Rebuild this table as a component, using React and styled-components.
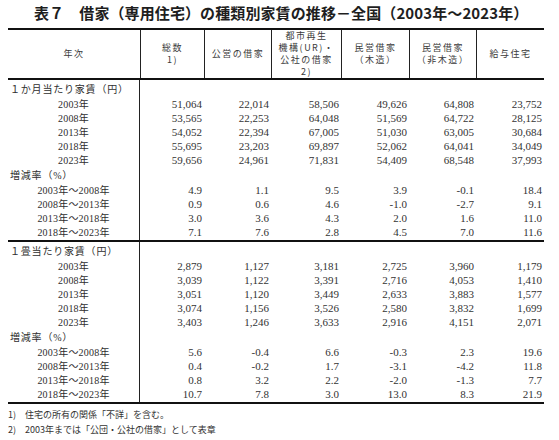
import React from "react";
import styled, { createGlobalStyle } from "styled-components";

const Global = createGlobalStyle`
  html, body { margin: 0; padding: 0; background: #fff; }
  body { font-family: "Liberation Serif", "Noto Sans CJK JP", serif; color: #2a2a2a; }
`;

const COLS = "132px 64px 67px 70px 68px 67px 68px";

const Page = styled.div`
  width: 559px;
  height: 440px;
  padding: 4px 0 0 8px;
  box-sizing: border-box;
  overflow: hidden;
`;

const TitleBar = styled.div`
  display: flex;
  justify-content: flex-start;
  padding-left: 26px;
  margin-bottom: 6px;
`;

const Title = styled.h1`
  margin: 0;
  font-family: "Noto Sans CJK JP", sans-serif;
  font-size: 15px;
  line-height: 18px;
  font-weight: 700;
  letter-spacing: 0.1px;
  color: #1e1e1e;
  white-space: nowrap;
`;

const Table = styled.div`
  width: 536px;
  border-top: 2px solid #111;
  border-bottom: 2px solid #111;
`;

const Header = styled.div`
  display: grid;
  grid-template-columns: ${COLS};
  height: 48px;
  border-bottom: 2px solid #111;
`;

const HeadCell = styled.div`
  display: flex;
  flex-direction: column;
  align-items: center;
  justify-content: center;
  text-align: center;
  font-family: "Noto Sans CJK JP", sans-serif;
  font-size: 9px;
  line-height: 12px;
  letter-spacing: 1.5px;
  color: #3a3a3a;
  border-left: ${(p) => (p.$first ? "none" : "1px solid #222")};
`;

const Section = styled.div`
  border-top: ${(p) => (p.$divider ? "2px solid #111" : "none")};
`;

const Row = styled.div`
  display: grid;
  grid-template-columns: ${COLS};
  height: ${(p) => p.$h}px;
  align-items: center;
`;

const Label = styled.div`
  height: 100%;
  display: flex;
  align-items: center;
  justify-content: ${(p) => (p.$center ? "center" : "flex-start")};
  padding-left: ${(p) => (p.$center ? 0 : 2)}px;
  border-right: 1px solid #222;
  box-sizing: border-box;
  font-size: 10px;
  letter-spacing: ${(p) => (p.$center ? 0.2 : 0.8)}px;
  color: #2e2e2e;
  white-space: nowrap;
`;

const Num = styled.div`
  text-align: right;
  padding-right: 2px;
  font-family: "Liberation Serif", serif;
  font-size: 11px;
  color: #333;
`;

const Notes = styled.div`
  margin-top: 3px;
  font-family: "Noto Sans CJK JP", sans-serif;
  font-size: 9px;
  line-height: 15px;
  color: #333;
`;

const headers = [
  ["年次"],
  ["総数", "1)"],
  ["公営の借家"],
  ["都市再生", "機構(UR)・", "公社の借家", "2)"],
  ["民営借家", "（木造）"],
  ["民営借家", "（非木造）"],
  ["給与住宅"],
];

const sections = [
  {
    label: "１か月当たり家賃（円）",
    rows: [
      ["2003年", "51,064", "22,014", "58,506", "49,626", "64,808", "23,752"],
      ["2008年", "53,565", "22,253", "64,048", "51,569", "64,722", "28,125"],
      ["2013年", "54,052", "22,394", "67,005", "51,030", "63,005", "30,684"],
      ["2018年", "55,695", "23,203", "69,897", "52,062", "64,041", "34,049"],
      ["2023年", "59,656", "24,961", "71,831", "54,409", "68,548", "37,993"],
    ],
    rates: [
      ["2003年～2008年", "4.9", "1.1", "9.5", "3.9", "-0.1", "18.4"],
      ["2008年～2013年", "0.9", "0.6", "4.6", "-1.0", "-2.7", "9.1"],
      ["2013年～2018年", "3.0", "3.6", "4.3", "2.0", "1.6", "11.0"],
      ["2018年～2023年", "7.1", "7.6", "2.8", "4.5", "7.0", "11.6"],
    ],
  },
  {
    label: "１畳当たり家賃（円）",
    rows: [
      ["2003年", "2,879", "1,127", "3,181", "2,725", "3,960", "1,179"],
      ["2008年", "3,039", "1,122", "3,391", "2,716", "4,053", "1,410"],
      ["2013年", "3,051", "1,120", "3,449", "2,633", "3,883", "1,577"],
      ["2018年", "3,074", "1,156", "3,526", "2,580", "3,832", "1,699"],
      ["2023年", "3,403", "1,246", "3,633", "2,916", "4,151", "2,071"],
    ],
    rates: [
      ["2003年～2008年", "5.6", "-0.4", "6.6", "-0.3", "2.3", "19.6"],
      ["2008年～2013年", "0.4", "-0.2", "1.7", "-3.1", "-4.2", "11.8"],
      ["2013年～2018年", "0.8", "3.2", "2.2", "-2.0", "-1.3", "7.7"],
      ["2018年～2023年", "10.7", "7.8", "3.0", "13.0", "8.3", "21.9"],
    ],
  },
];

function DataRow({ cells }) {
  return (
    <Row $h={14}>
      <Label $center>{cells[0]}</Label>
      {cells.slice(1).map((c, i) => (
        <Num key={i}>{c}</Num>
      ))}
    </Row>
  );
}

function LabelRow({ text, h = 16 }) {
  return (
    <Row $h={h}>
      <Label>{text}</Label>
    </Row>
  );
}

export default function App() {
  return (
    <>
      <Global />
      <Page>
        <TitleBar>
          <Title>表７　借家（専用住宅）の種類別家賃の推移－全国（2003年～2023年）</Title>
        </TitleBar>
        <Table>
          <Header>
            {headers.map((lines, i) => (
              <HeadCell key={i} $first={i === 0}>
                {lines.map((l, j) => (
                  <span key={j}>{l}</span>
                ))}
              </HeadCell>
            ))}
          </Header>
          {sections.map((s, si) => (
            <Section key={si} $divider={si > 0}>
              <LabelRow text={s.label} />
              {s.rows.map((r, i) => (
                <DataRow key={i} cells={r} />
              ))}
              <LabelRow text="増減率（%）" />
              {s.rates.map((r, i) => (
                <DataRow key={i} cells={r} />
              ))}
              <Row $h={2}>
                <Label />
              </Row>
            </Section>
          ))}
        </Table>
        <Notes>
          <div>1)　住宅の所有の関係「不詳」を含む。</div>
          <div>2)　2003年までは「公団・公社の借家」として表章</div>
        </Notes>
      </Page>
    </>
  );
}
